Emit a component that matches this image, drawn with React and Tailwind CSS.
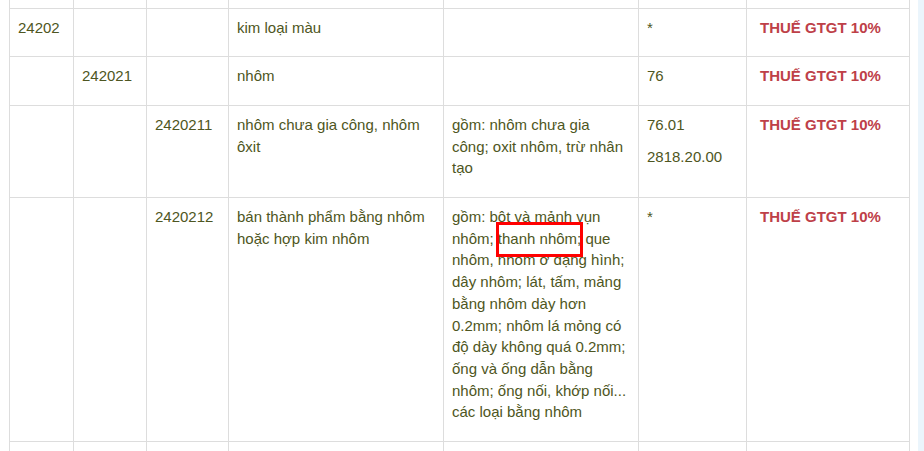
import React from "react";

const rows = [
  {
    c1: "24202",
    c2: "",
    c3: "",
    name: "kim loại màu",
    desc: "",
    hs: ["*"],
  },
  {
    c1: "",
    c2: "242021",
    c3: "",
    name: "nhôm",
    desc: "",
    hs: ["76"],
  },
  {
    c1: "",
    c2: "",
    c3: "2420211",
    name: "nhôm chưa gia công, nhôm ôxit",
    desc: "gồm: nhôm chưa gia công; oxit nhôm, trừ nhân tạo",
    hs: ["76.01", "2818.20.00"],
  },
  {
    c1: "",
    c2: "",
    c3: "2420212",
    name: "bán thành phẩm bằng nhôm hoặc hợp kim nhôm",
    desc: "gồm: bột và mảnh vụn nhôm; thanh nhôm; que nhôm, nhôm ở dạng hình; dây nhôm; lát, tấm, mảng bằng nhôm dày hơn 0.2mm; nhôm lá mỏng có độ dày không quá 0.2mm; ống và ống dẫn bằng nhôm; ống nối, khớp nối... các loại bằng nhôm",
    hs: ["*"],
    mark: true,
  },
];

const cell = "border border-[#dddddd] px-[8px] pt-[8px] pb-[8px] align-top";

const Text = ({ children }) =>
  children ? <p className="mb-[10px]">{children}</p> : null;

const App = () => {
  return (
    <div
      className="flex h-[451px] w-[924px] overflow-hidden bg-white text-[15px] leading-[21.7px] text-[#4e5622]"
      style={{ fontFamily: '"Liberation Sans", Arial, sans-serif' }}
    >
      <div className="flex-1 pl-[9px]">
        <table className="w-[900px] table-fixed border-collapse">
          <colgroup>
            <col className="w-[64px]" />
            <col className="w-[73px]" />
            <col className="w-[82px]" />
            <col className="w-[215px]" />
            <col className="w-[195px]" />
            <col className="w-[108px]" />
            <col className="w-[163px]" />
          </colgroup>
          <tbody>
            {/* row cut off at the top */}
            <tr className="h-[8px]">
              {[0, 1, 2, 3, 4, 5, 6].map((i) => (
                <td key={i} className="border border-t-0 border-[#dddddd] p-0" />
              ))}
            </tr>

            {rows.map((r, idx) => (
              <tr key={idx}>
                <td className={cell}><Text>{r.c1}</Text></td>
                <td className={cell}><Text>{r.c2}</Text></td>
                <td className={cell}><Text>{r.c3}</Text></td>
                <td className={cell}><Text>{r.name}</Text></td>
                <td className={`${cell} relative`}>
                  <Text>{r.desc}</Text>
                  {r.mark && (
                    <span className="absolute left-[52px] top-[24px] h-[35px] w-[87px] border-[3px] border-[#ff0000]" />
                  )}
                </td>
                <td className={cell}>
                  {r.hs.map((h) => (
                    <Text key={h}>{h}</Text>
                  ))}
                </td>
                <td className={`${cell} pl-[13px]`}>
                  <p className="mb-[10px] font-bold text-[#be4048]">THUẾ GTGT 10%</p>
                </td>
              </tr>
            ))}

            {/* next row, cut off at the bottom */}
            <tr className="h-[40px]">
              {[0, 1, 2, 3, 4, 5, 6].map((i) => (
                <td key={i} className="border border-[#dddddd] p-0" />
              ))}
            </tr>
          </tbody>
        </table>
      </div>
      <div className="w-[6px] bg-[#ebf5fc]" />
    </div>
  );
};

export default App;
